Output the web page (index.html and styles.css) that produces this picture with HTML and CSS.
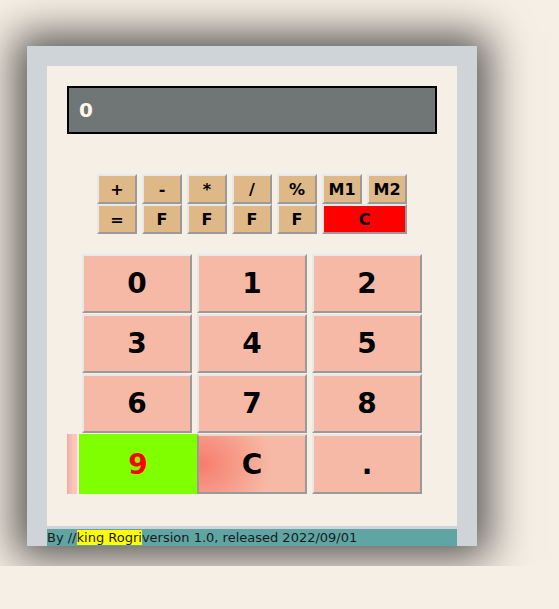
FILE: index.html
```html
<!DOCTYPE html>
<html>
<head>
<meta charset="utf-8">
<title>Calculator</title>
<link rel="stylesheet" href="styles.css">
</head>
<body>
<div class="page">
  <div class="calc">
    <div class="inner">
      <div class="display">0</div>
      <div class="ops">
        <button class="op">+</button>
        <button class="op">-</button>
        <button class="op">*</button>
        <button class="op">/</button>
        <button class="op">%</button>
        <button class="op">M1</button>
        <button class="op">M2</button>
        <button class="op">=</button>
        <button class="op">F</button>
        <button class="op">F</button>
        <button class="op">F</button>
        <button class="op">F</button>
        <button class="op clear">C</button>
      </div>
      <div class="keys">
        <button class="key">0</button>
        <button class="key">1</button>
        <button class="key">2</button>
        <button class="key">3</button>
        <button class="key">4</button>
        <button class="key">5</button>
        <button class="key">6</button>
        <button class="key">7</button>
        <button class="key">8</button>
        <div class="row4">
          <span class="strip"></span>
          <button class="key nine">9</button>
          <button class="key kc">C</button>
          <button class="key dot">.</button>
        </div>
      </div>
    </div>
    <div class="footer">By //<span class="hl">king Rogri</span>version 1.0, released 2022/09/01</div>
  </div>
</div>
</body>
</html>
```

FILE: styles.css
```css
html, body {
  margin: 0;
  padding: 0;
  background: #f6efe5;
}

.page {
  height: 566px;
  overflow: hidden;
  padding: 46px 0 0 27px;
  box-sizing: border-box;
}

.calc {
  width: 450px;
  height: 500px;
  box-sizing: border-box;
  padding: 20px 20px 0;
  background: #cfd4d8;
  box-shadow: 0 0 40px 12px rgba(0, 0, 0, 0.65);
}

.inner {
  height: 460px;
  background: #f6efe5;
  display: flex;
  flex-direction: column;
  overflow: visible;
}

.display {
  margin: 20px 20px 0;
  height: 48px;
  box-sizing: border-box;
  border: 2px solid #000;
  background: #707676;
  color: #fffbe8;
  font: bold 20px "DejaVu Sans", sans-serif;
  padding-left: 10px;
  display: flex;
  align-items: center;
}

button {
  margin: 0;
  padding: 0;
  box-sizing: border-box;
  border-width: 2px;
  border-style: solid;
  border-color: #e8e8e8 #9a9a9a #9a9a9a #e8e8e8;
  color: #000;
  font-family: "DejaVu Sans", sans-serif;
  font-weight: bold;
  cursor: pointer;
}

.ops {
  margin: 40px auto 0;
  width: 310px;
  display: grid;
  grid-template-columns: repeat(7, 40px);
  grid-auto-rows: 30px;
  column-gap: 5px;
}

.op {
  background: #deb887;
  font-size: 16px;
}

.op.clear {
  grid-column: span 2;
  background: #ff0000;
}

.keys {
  margin: 20px 0 0 35px;
  width: 340px;
  display: grid;
  grid-template-columns: repeat(3, 110px);
  grid-auto-rows: 59px;
  column-gap: 5px;
  row-gap: 1px;
}

.key {
  background: #f6b9a5;
  font-size: 28px;
}

.row4 {
  grid-column: 1 / -1;
  display: flex;
  margin-left: -15px;
  height: 60px;
}

.strip {
  width: 10px;
  margin-right: 2px;
  background: linear-gradient(to right, #f7aa9e, #fbc6bb 60%, #fbc6bb);
}

.key.nine {
  width: 118px;
  border-color: #7fff00;
  background: #7fff00;
  color: #ff0000;
}

.key.kc {
  width: 110px;
  border-color: #e8d8d2 #9a9a9a #9a9a9a #9a9a9a;
  background: radial-gradient(ellipse 70px 60px at 2px 50%, #f77c6b 0%, #f6b9a5 100%);
}

.key.dot {
  width: 110px;
  margin-left: 5px;
}

.footer {
  margin-top: 3px;
  height: 17px;
  background: #5fa5a4;
  color: #1a1a1a;
  font: 13px/17px "DejaVu Sans", sans-serif;
  white-space: nowrap;
}

.hl {
  background: #ffff00;
}
```
